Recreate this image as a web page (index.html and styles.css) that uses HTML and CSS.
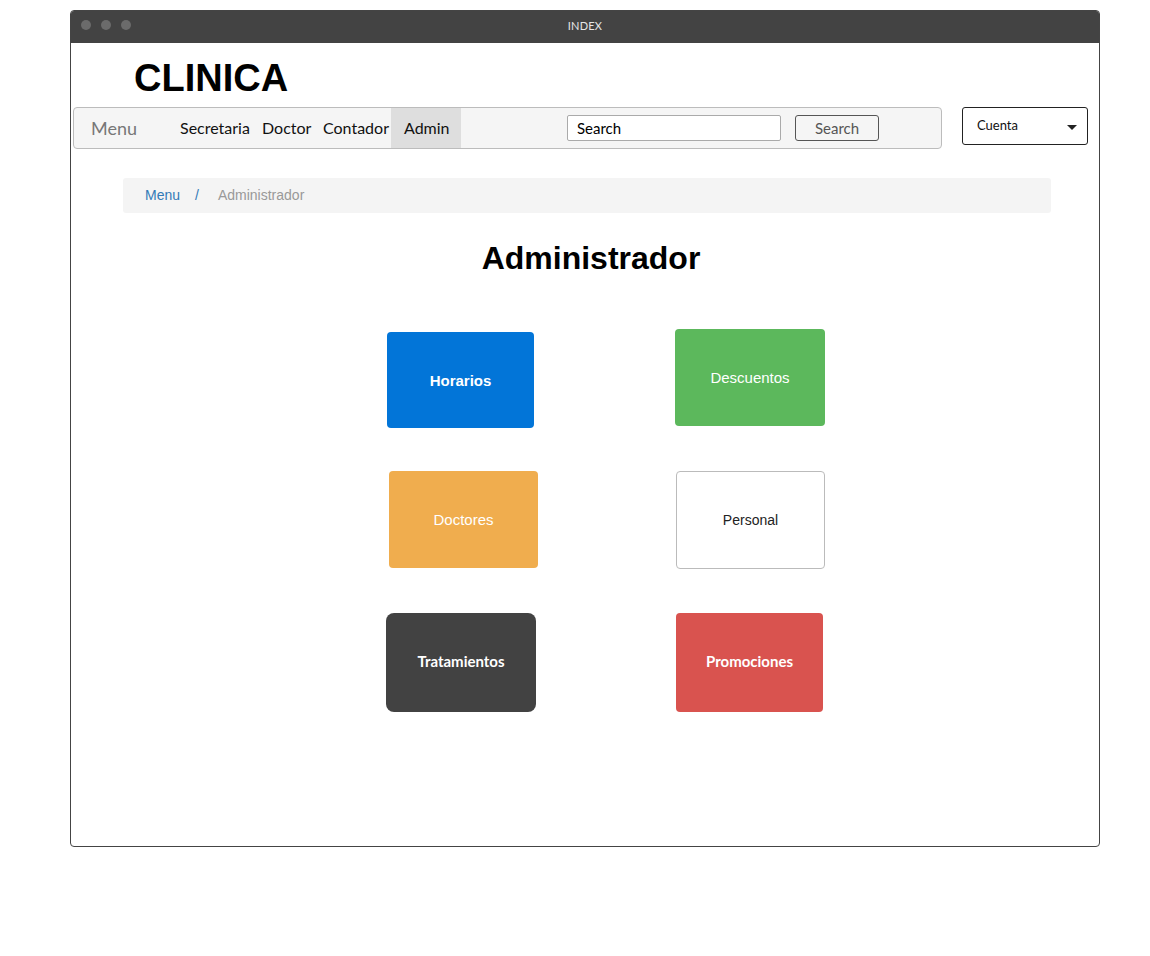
FILE: index.html
```html
<!DOCTYPE html>
<html lang="es">
<head>
<meta charset="utf-8">
<title>INDEX</title>
<link rel="stylesheet" href="styles.css">
</head>
<body>
<div class="window">
  <div class="titlebar">
    <div class="dots"><span class="dot"></span><span class="dot"></span><span class="dot"></span></div>
    <div class="wtitle">INDEX</div>
    <div></div>
  </div>
  <div class="content">
    <h1 class="brand">CLINICA</h1>
    <div class="toprow">
      <nav class="navbar">
        <span class="nav-brand">Menu</span>
        <a class="nav-link l-sec">Secretaria</a>
        <a class="nav-link l-doc">Doctor</a>
        <a class="nav-link l-con">Contador</a>
        <a class="nav-link l-adm active">Admin</a>
        <div class="search-input">Search</div>
        <div class="search-btn">Search</div>
      </nav>
      <div class="account">
        <span>Cuenta</span>
        <span class="caret"></span>
      </div>
    </div>
    <div class="breadcrumb">
      <a class="crumb-link">Menu</a>
      <span class="crumb-sep">/</span>
      <span class="crumb-current">Administrador</span>
    </div>
    <h2 class="page-title">Administrador</h2>
    <div class="tiles">
      <div class="tile t-horarios">Horarios</div>
      <div class="tile t-descuentos">Descuentos</div>
      <div class="tile t-doctores">Doctores</div>
      <div class="tile t-personal">Personal</div>
      <div class="tile t-tratamientos">Tratamientos</div>
      <div class="tile t-promociones">Promociones</div>
    </div>
  </div>
</div>
</body>
</html>
```

FILE: styles.css
```css
* { box-sizing: border-box; }
html, body { margin: 0; padding: 0; background: #fff; }
body { font-family: "Liberation Sans", Arial, sans-serif; }

.window {
  margin: 10px 0 0 70px;
  width: 1030px;
  height: 837px;
  border: 1px solid #444;
  border-radius: 4px;
  overflow: hidden;
}

.titlebar {
  height: 32px;
  background: #434343;
  display: grid;
  grid-template-columns: 1fr auto 1fr;
  align-items: center;
  padding-bottom: 4px;
}
.dots { display: flex; gap: 10px; padding-left: 10px; }
.dot { width: 10px; height: 10px; border-radius: 50%; background: #6b6b6b; }
.wtitle {
  font-family: "Lato", "Open Sans", sans-serif;
  font-size: 11px;
  color: #e6e6e6;
  letter-spacing: 0.2px;
}

.content { display: flex; flex-direction: column; }

.brand {
  margin: 0;
  padding: 6px 0 0 63px;
  height: 64px;
  line-height: 58px;
  font-size: 38px;
  font-weight: bold;
  color: #000;
}

.toprow { display: flex; align-items: flex-start; padding-left: 2px; }

.navbar {
  width: 869px;
  height: 42px;
  background: #f5f5f5;
  border: 1px solid #bcbcbc;
  border-radius: 4px;
  display: flex;
  align-items: stretch;
  font-family: "Lato", "Open Sans", sans-serif;
}
.nav-brand {
  width: 106px;
  padding-left: 17px;
  font-size: 18px;
  color: #777;
  display: flex;
  align-items: center;
}
.nav-link {
  font-size: 16px;
  color: #111;
  display: flex;
  align-items: center;
  padding-bottom: 1px;
}
.l-sec { width: 82px; }
.l-doc { width: 61px; }
.l-con { width: 68px; }
.l-adm { width: 70px; padding-left: 13px; }
.nav-link.active { background: #dedede; }

.search-input {
  align-self: center;
  margin-left: 106px;
  width: 214px;
  height: 26px;
  background: #fff;
  border: 1px solid #aaa;
  border-radius: 2px;
  padding-left: 9px;
  font-size: 15px;
  color: #000;
  display: flex;
  align-items: center;
  padding-bottom: 1px;
}
.search-btn {
  align-self: center;
  margin-left: 14px;
  width: 84px;
  height: 26px;
  border: 1px solid #555;
  border-radius: 3px;
  font-size: 15px;
  color: #555;
  display: flex;
  align-items: center;
  justify-content: center;
}

.account {
  margin-left: 20px;
  width: 126px;
  height: 38px;
  border: 1px solid #222;
  border-radius: 3px;
  display: flex;
  align-items: center;
  justify-content: space-between;
  padding: 0 10px 2px 14px;
  font-family: "Lato", "Open Sans", sans-serif;
  font-size: 13px;
  color: #111;
}
.caret {
  width: 0; height: 0;
  border-left: 5px solid transparent;
  border-right: 5px solid transparent;
  border-top: 5px solid #222;
  margin-top: 4px;
}

.breadcrumb {
  margin: 29px 0 0 52px;
  width: 928px;
  height: 35px;
  background: #f4f4f4;
  border-radius: 3px;
  display: flex;
  align-items: center;
  padding-left: 22px;
  padding-bottom: 1px;
  font-size: 14px;
}
.crumb-link { color: #337ab7; }
.crumb-sep { color: #337ab7; margin: 0 19px 0 15px; }
.crumb-current { color: #999; }

.page-title {
  margin: 25px 0 0 0;
  padding-left: 12px;
  text-align: center;
  font-size: 32px;
  font-weight: bold;
  line-height: 40px;
  color: #000;
}

.tiles {
  margin: 51px 0 0 315px;
  display: grid;
  grid-template-columns: 150px 150px;
  column-gap: 139px;
  row-gap: 43px;
  align-items: start;
}
.tile {
  display: flex;
  align-items: center;
  justify-content: center;
  border-radius: 4px;
  font-size: 15px;
  color: #fff;
}
.t-horarios {
  margin: 3px 0 0 1px;
  width: 147px; height: 96px;
  background: #0275d8;
  font-weight: bold;
}
.t-descuentos {
  width: 150px; height: 97px;
  background: #5cb85c;
}
.t-doctores {
  margin-left: 3px;
  width: 149px; height: 97px;
  background: #f0ad4e;
}
.t-personal {
  margin-left: 1px;
  width: 149px; height: 98px;
  background: #fff;
  border: 1px solid #bbb;
  color: #222;
  font-size: 14px;
}
.t-tratamientos {
  margin-top: 1px;
  width: 150px; height: 99px;
  background: #424242;
  border-radius: 8px;
  font-family: "Lato", "Open Sans", sans-serif;
  font-weight: bold;
  font-size: 15px;
  padding-bottom: 3px;
}
.t-promociones {
  margin: 1px 0 0 1px;
  width: 147px; height: 99px;
  background: #d9534f;
  font-family: "Lato", "Open Sans", sans-serif;
  font-weight: bold;
  font-size: 15px;
  padding-bottom: 3px;
}
```
